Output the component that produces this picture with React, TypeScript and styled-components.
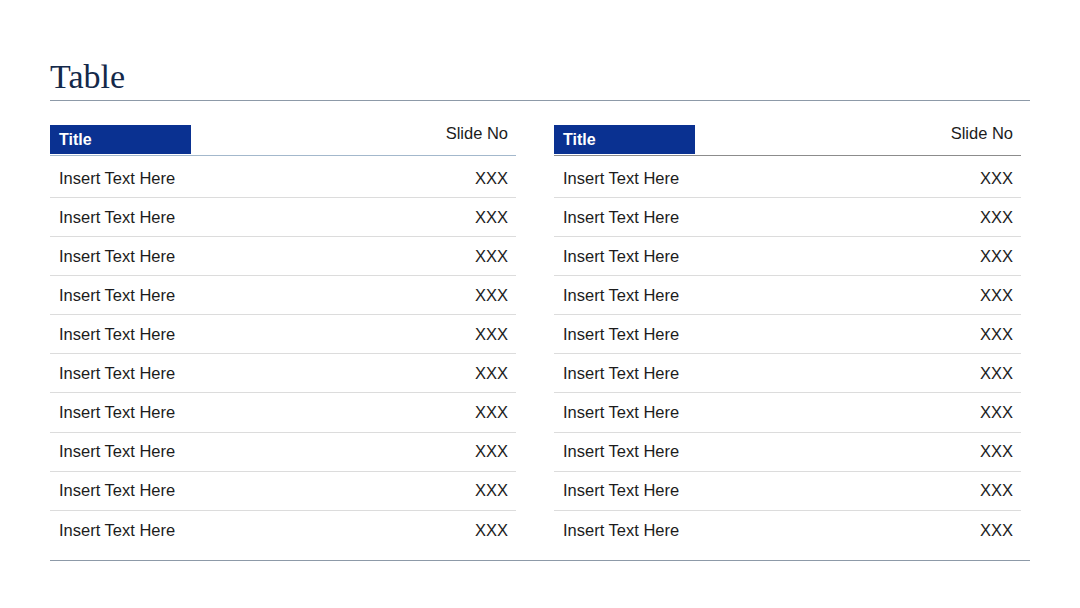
import React from 'react';
import styled, { createGlobalStyle } from 'styled-components';

const GlobalStyle = createGlobalStyle`
    html, body {
        margin: 0;
        padding: 0;
        background: #ffffff;
    }
    body {
        font-family: 'Liberation Sans', Arial, sans-serif;
    }
`;

const Page = styled.div`
    width: 1080px;
    height: 608px;
    box-sizing: border-box;
    padding: 0 50px;
    background: #ffffff;
`;

const Heading = styled.h1`
    margin: 0;
    padding-top: 60px;
    height: 34px;
    line-height: 34px;
    font-family: 'Liberation Serif', 'Times New Roman', serif;
    font-weight: 400;
    font-size: 34px;
    color: #14294a;
`;

interface IRuleProps {
    gap: number;
}
const Rule = styled.div`
    margin-top: ${(props: IRuleProps) => props.gap}px;
    height: 0;
    border-top: 1.5px solid #8d9aa8;
`;

const Columns = styled.div`
    display: grid;
    grid-template-columns: 466px 467px;
    column-gap: 38px;
    margin-top: 24px;
`;

const TableBox = styled.div`
    display: flex;
    flex-direction: column;
`;

interface IHeaderProps {
    lineColor: string;
}
const HeaderRow = styled.div`
    display: flex;
    justify-content: space-between;
    align-items: flex-start;
    height: 29px;
    border-bottom: 1.5px solid ${(props: IHeaderProps) => props.lineColor};
    padding-bottom: 1px;
`;

const TitleTag = styled.div`
    width: 141px;
    height: 29px;
    box-sizing: border-box;
    padding-left: 9px;
    background: #0a3191;
    color: #ffffff;
    font-weight: 700;
    font-size: 16px;
    line-height: 29px;
`;

const SlideNo = styled.div`
    padding-right: 8px;
    font-size: 16.5px;
    line-height: 17px;
    color: #1c1c1c;
`;

interface IRowProps {
    first?: boolean;
    last?: boolean;
}
const Row = styled.div`
    display: flex;
    justify-content: space-between;
    align-items: center;
    box-sizing: border-box;
    height: ${(props: IRowProps) => (props.first ? '42px' : '39.1px')};
    padding: ${(props: IRowProps) => (props.first ? '3px 8px 0 9px' : '0 8px 0 9px')};
    border-bottom: ${(props: IRowProps) => (props.last ? 'none' : '1px solid #dcdcdc')};
    font-size: 16.5px;
    color: #1c1c1c;
`;

const ROWS = Array.from({ length: 10 }, () => ({ label: 'Insert Text Here', value: 'XXX' }));

const Table = ({ lineColor }: { lineColor: string }) => (
    <TableBox>
        <HeaderRow lineColor={lineColor}>
            <TitleTag>Title</TitleTag>
            <SlideNo>Slide No</SlideNo>
        </HeaderRow>
        {ROWS.map((r, i) => (
            <Row key={i} first={i === 0} last={i === ROWS.length - 1}>
                <span>{r.label}</span>
                <span>{r.value}</span>
            </Row>
        ))}
    </TableBox>
);

export default function App() {
    return (
        <>
            <GlobalStyle />
            <Page>
                <Heading>Table</Heading>
                <Rule gap={6} />
                <Columns>
                    <Table lineColor="#a3b8cc" />
                    <Table lineColor="#8c8c8c" />
                </Columns>
                <Rule gap={10.5} />
            </Page>
        </>
    );
}
